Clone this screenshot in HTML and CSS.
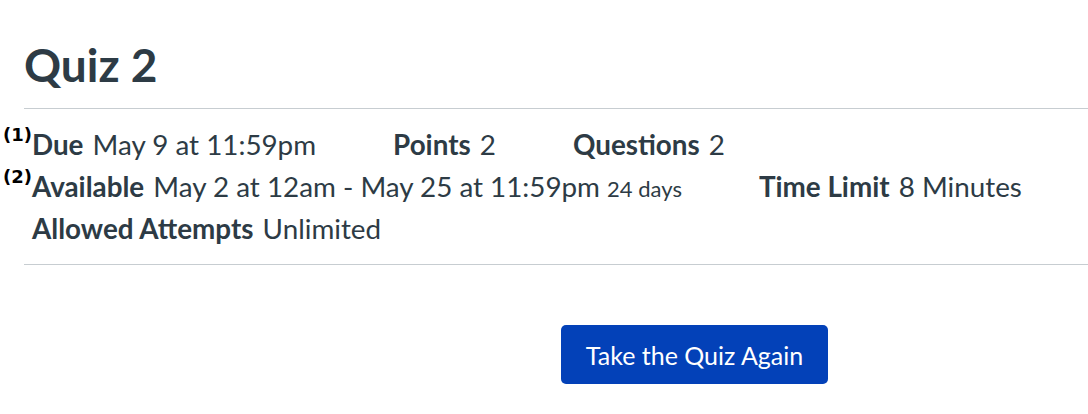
FILE: index.html
```html
<!DOCTYPE html>
<html>
<head>
<meta charset="utf-8">
<link rel="stylesheet" href="styles.css">
</head>
<body>
<div class="page">
  <h1 class="title">Quiz 2</h1>
  <div class="details">
    <div class="item"><sup class="note">(1)</sup><span class="label">Due</span> <span class="value">May 9 at 11:59pm</span></div>
    <div class="item"><span class="label">Points</span> <span class="value">2</span></div>
    <div class="item"><span class="label">Questions</span> <span class="value">2</span></div>
    <div class="item"><sup class="note">(2)</sup><span class="label">Available</span> <span class="value">May 2 at 12am - May 25 at 11:59pm <span class="small">24 days</span></span></div>
    <div class="item"><span class="label">Time Limit</span> <span class="value">8 Minutes</span></div>
    <div class="item"><span class="label">Allowed Attempts</span> <span class="value">Unlimited</span></div>
  </div>
  <div class="actions">
    <button class="btn">Take the Quiz Again</button>
  </div>
</div>
</body>
</html>
```

FILE: styles.css
```css
html, body {
  margin: 0;
  padding: 0;
  background: #ffffff;
}
body {
  font-family: Lato, "Liberation Sans", sans-serif;
  color: #2d3b45;
}
.page {
  padding-left: 24px;
}
.title {
  margin: 0;
  padding-top: 37px;
  padding-left: 0;
  font-size: 46px;
  line-height: 55px;
  font-weight: 700;
  color: #2d3b45;
}
.details {
  margin-top: 16px;
  border-top: 1px solid #c7cdd1;
  border-bottom: 1px solid #c7cdd1;
  padding: 15px 0 14px 8px;
  display: flex;
  flex-wrap: wrap;
  column-gap: 77px;
  font-size: 27.8px;
  line-height: 42px;
}
.item {
  position: relative;
  white-space: nowrap;
}
.label {
  font-weight: 700;
  margin-right: 2px;
}
.small {
  font-size: 22px;
  line-height: 1;
}
.note {
  position: absolute;
  right: 100%;
  top: 2px;
  font-family: "DejaVu Sans", sans-serif;
  font-weight: 700;
  font-size: 18px;
  color: #000;
  line-height: 1;
}
.actions {
  padding: 60px 0 0 537px;
}
.btn {
  font-family: Lato, "Liberation Sans", sans-serif;
  font-size: 25px;
  color: #ffffff;
  background: #0341b8;
  border: 0;
  border-radius: 5px;
  height: 59px;
  width: 267px;
  padding: 0;
}
```
